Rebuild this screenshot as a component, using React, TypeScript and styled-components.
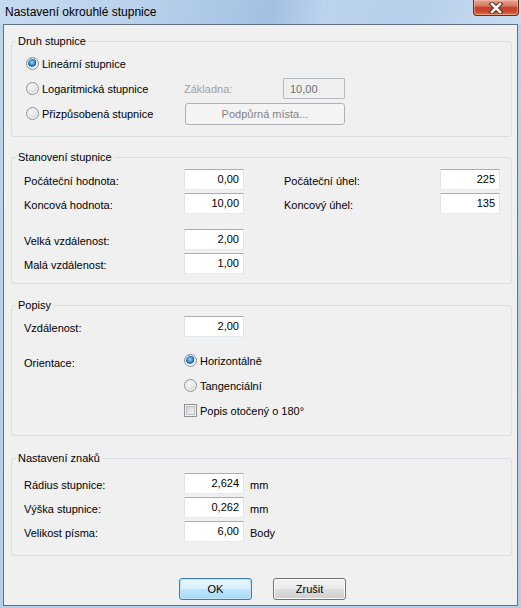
import styled, { createGlobalStyle, css } from "styled-components";

const GlobalStyle = createGlobalStyle`
  html, body {
    margin: 0;
    padding: 0;
    background: #b9d1ea;
  }
  * {
    box-sizing: border-box;
  }
`;

const App = () => {
  return (
    <>
      <GlobalStyle />
      <Window>
        <TitleBar>
          <Title>Nastavení okrouhlé stupnice</Title>
          <CloseButton>
            <svg width="16" height="12" viewBox="0 0 16 12">
              <path d="M4 2 L12 10 M12 2 L4 10" stroke="#5a2a22" strokeWidth="4.6" strokeLinecap="square" />
              <path d="M4 2 L12 10 M12 2 L4 10" stroke="#ffffff" strokeWidth="2.6" strokeLinecap="square" />
            </svg>
          </CloseButton>
        </TitleBar>

        <Client>
          <Group $top={9}>
            <Legend>Druh stupnice</Legend>
            <TypeGrid>
              <Choice>
                <Radio $checked />
                Lineární stupnice
              </Choice>
              <span />
              <span />

              <Choice>
                <Radio />
                Logaritmická stupnice
              </Choice>
              <DimLabel>Základna:</DimLabel>
              <DisabledInput value="10,00" readOnly />

              <Choice>
                <Radio />
                Přizpůsobená stupnice
              </Choice>
              <DisabledButton>Podpůrná místa...</DisabledButton>
            </TypeGrid>
          </Group>

          <Group $top={13}>
            <Legend>Stanovení stupnice</Legend>
            <Body $pad="3px 0 8px 12px">
              <Row>
                <Label>Počáteční hodnota:</Label>
                <NumberInput value="0,00" readOnly />
                <Label $second>Počáteční úhel:</Label>
                <NumberInput value="225" readOnly />
              </Row>
              <Row>
                <Label>Koncová hodnota:</Label>
                <NumberInput value="10,00" readOnly />
                <Label $second>Koncový úhel:</Label>
                <NumberInput value="135" readOnly />
              </Row>
              <Row $space={12}>
                <Label>Velká vzdálenost:</Label>
                <NumberInput value="2,00" readOnly />
              </Row>
              <Row>
                <Label>Malá vzdálenost:</Label>
                <NumberInput value="1,00" readOnly />
              </Row>
            </Body>
          </Group>

          <Group $top={14}>
            <Legend>Popisy</Legend>
            <Body $pad="2px 0 12px 12px">
              <Row>
                <Label>Vzdálenost:</Label>
                <NumberInput value="2,00" readOnly />
              </Row>
              <OrientRow>
                <Label>Orientace:</Label>
                <Options>
                  <Choice>
                    <Radio $checked />
                    Horizontálně
                  </Choice>
                  <Choice>
                    <Radio />
                    Tangenciální
                  </Choice>
                  <Choice>
                    <Check />
                    Popis otočený o 180°
                  </Choice>
                </Options>
              </OrientRow>
            </Body>
          </Group>

          <Group $top={15}>
            <Legend>Nastavení znaků</Legend>
            <Body $pad="6px 0 12px 12px">
              <Row>
                <Label>Rádius stupnice:</Label>
                <NumberInput value="2,624" readOnly />
                <Unit>mm</Unit>
              </Row>
              <Row>
                <Label>Výška stupnice:</Label>
                <NumberInput value="0,262" readOnly />
                <Unit>mm</Unit>
              </Row>
              <Row>
                <Label>Velikost písma:</Label>
                <NumberInput value="6,00" readOnly />
                <Unit>Body</Unit>
              </Row>
            </Body>
          </Group>

          <Footer>
            <PushButton $default>OK</PushButton>
            <PushButton>Zrušit</PushButton>
          </Footer>
        </Client>
      </Window>
    </>
  );
};

export default App;

const Window = styled.div`
  width: 521px;
  height: 608px;
  display: flex;
  flex-direction: column;
  background: linear-gradient(180deg, #bcd4ec 0%, #b4cde8 100%);
  font-family: "Liberation Sans", Arial, sans-serif;
  font-size: 11px;
  color: #000;
`;

const TitleBar = styled.div`
  height: 24px;
  display: flex;
  align-items: flex-start;
  padding-left: 5px;
  background: linear-gradient(
    100deg,
    #c6daef 0%,
    #bad2ec 25%,
    #aac6e5 45%,
    #a2c0e2 52%,
    #bcd3ec 62%,
    #b6cfea 78%,
    #c8dcf0 100%
  );
`;

const Title = styled.span`
  font-size: 12px;
  line-height: 24px;
  color: #000;
  white-space: nowrap;
`;

const CloseButton = styled.div`
  margin-left: auto;
  margin-right: 2px;
  width: 46px;
  height: 16px;
  display: flex;
  align-items: center;
  justify-content: center;
  border: 1px solid #6b2a20;
  border-top: none;
  border-radius: 0 0 4px 4px;
  background: linear-gradient(180deg, #e8a493 0%, #d67a63 40%, #c7412a 50%, #c8452d 75%, #e07a55 100%);
  box-shadow: inset 0 0 0 1px rgba(255, 200, 180, 0.5);
`;

const Client = styled.div`
  flex: 1;
  margin: 0 3px 2px 3px;
  border: 1px solid #5f7287;
  background: #f0f0f0;
  padding: 0 5px 0 7px;
  display: flex;
  flex-direction: column;
`;

const Group = styled.fieldset<{ $top: number }>`
  margin: ${(p) => p.$top}px 0 0 0;
  padding: 0;
  min-inline-size: 0;
  border: 1px solid #d5dfe5;
  border-radius: 3px;
`;

const Legend = styled.legend`
  margin-left: 4px;
  padding: 0 2px;
  font-size: 11px;
  line-height: 14px;
`;

const Body = styled.div<{ $pad: string }>`
  padding: ${(p) => p.$pad};
`;

const TypeGrid = styled.div`
  display: grid;
  grid-template-columns: 158px 99px 62px;
  grid-auto-rows: 25px;
  align-items: center;
  padding: 3px 0 10px 14px;

  & > button {
    grid-column: 2 / span 2;
    margin-left: 1px;
  }
`;

const Row = styled.div<{ $space?: number }>`
  height: 24px;
  display: flex;
  align-items: center;
  margin-top: ${(p) => p.$space ?? 0}px;
`;

const OrientRow = styled.div`
  display: flex;
  align-items: flex-start;
  margin-top: 10px;

  & > span {
    line-height: 25px;
  }
`;

const Options = styled.div`
  display: flex;
  flex-direction: column;

  & > label {
    height: 25px;
  }
`;

const Label = styled.span<{ $second?: boolean }>`
  width: ${(p) => (p.$second ? "156px" : "160px")};
  margin-left: ${(p) => (p.$second ? "40px" : "0")};
  padding-top: 3px;
  flex-shrink: 0;
  white-space: nowrap;
`;

const DimLabel = styled.span`
  color: #a0a0a0;
`;

const Unit = styled.span`
  margin-left: 6px;
  padding-top: 3px;
`;

const inputBase = css`
  height: 21px;
  font-family: "Liberation Sans", Arial, sans-serif;
  font-size: 11px;
  outline: none;
  margin: 0;
`;

const NumberInput = styled.input`
  ${inputBase};
  width: 60px;
  text-align: right;
  padding: 0 4px 0 2px;
  background: #fff;
  color: #000;
  border: 1px solid #e2e3ea;
  border-top-color: #abadb3;
  border-bottom-color: #e3e9ef;
`;

const DisabledInput = styled.input`
  ${inputBase};
  width: 62px;
  padding: 0 6px;
  background: #f0f0f0;
  color: #6d6d6d;
  border: 1px solid #b4b9bd;
  border-radius: 1px;
`;

const Choice = styled.label`
  display: flex;
  align-items: center;
  gap: 3px;
  white-space: nowrap;
`;

const Radio = styled.span<{ $checked?: boolean }>`
  width: 13px;
  height: 13px;
  flex-shrink: 0;
  border-radius: 50%;
  border: 1px solid #8f9194;
  background: ${(p) =>
    p.$checked
      ? "radial-gradient(circle at 45% 40%, #9fd5f7 0%, #3b93d8 28%, #0f5fa6 45%, #e4e4e4 52%, #f8f8f8 100%)"
      : "radial-gradient(circle at 40% 35%, #f8f8f8 0%, #e2e2e2 55%, #cfd1d4 80%, #f4f4f4 100%)"};
  box-shadow: inset 0 0 0 1px #f4f4f4;
`;

const Check = styled.span`
  width: 13px;
  height: 13px;
  flex-shrink: 0;
  border: 1px solid #8f9194;
  background: linear-gradient(135deg, #cbcfd5 0%, #e6e7e9 60%, #f6f6f6 100%);
  box-shadow: inset 0 0 0 1px #f4f4f4, inset 0 0 0 2px #b9bcc0;
`;

const DisabledButton = styled.button`
  height: 22px;
  font-family: "Liberation Sans", Arial, sans-serif;
  font-size: 11px;
  color: #838383;
  background: #f4f4f4;
  border: 1px solid #adb2b5;
  border-radius: 3px;
  padding: 0;
`;

const Footer = styled.div`
  display: flex;
  justify-content: center;
  gap: 21px;
  padding: 22px 0 0 0;
  margin-right: -2px;
`;

const PushButton = styled.button<{ $default?: boolean }>`
  width: 73px;
  height: 22px;
  padding: 0;
  font-family: "Liberation Sans", Arial, sans-serif;
  font-size: 11px;
  color: #000;
  border-radius: 3px;
  border: 1px solid ${(p) => (p.$default ? "#3c7fb1" : "#707070")};
  background: ${(p) =>
    p.$default
      ? "linear-gradient(180deg, #eaf6fd 0%, #d9f0fc 50%, #bee6fd 50%, #a7d9f5 100%)"
      : "linear-gradient(180deg, #f2f2f2 0%, #ebebeb 50%, #dddddd 50%, #cfcfcf 100%)"};
  box-shadow: inset 0 0 0 1px ${(p) => (p.$default ? "#bfe5fa" : "#fcfcfc")};
`;
